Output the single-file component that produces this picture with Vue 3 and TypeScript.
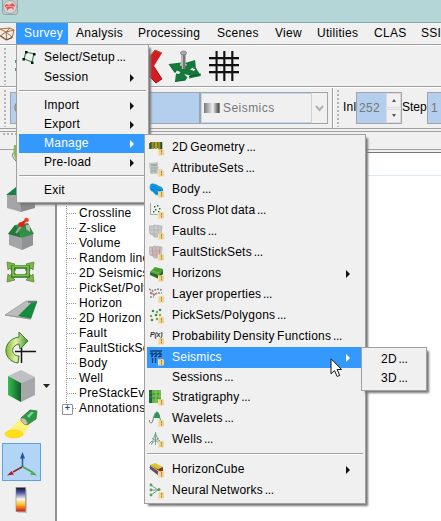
<script setup lang="ts">
interface Entry { label: string; more?: boolean; icon?: string; arrow?: boolean; active?: boolean; sep?: boolean }

const bar: { label: string; width: number; active?: boolean }[] = [
  { label: 'Survey', width: 52, active: true },
  { label: 'Analysis', width: 62 },
  { label: 'Processing', width: 79 },
  { label: 'Scenes', width: 58 },
  { label: 'View', width: 42 },
  { label: 'Utilities', width: 57 },
  { label: 'CLAS', width: 47 },
  { label: 'SSIS', width: 50 },
]

const survey: Entry[] = [
  { label: 'Select/Setup', more: true, icon: 'setup' },
  { label: 'Session', arrow: true },
  { label: '', sep: true },
  { label: 'Import', arrow: true },
  { label: 'Export', arrow: true },
  { label: 'Manage', arrow: true, active: true },
  { label: 'Pre-load', arrow: true },
  { label: '', sep: true },
  { label: 'Exit' },
]

const manage: Entry[] = [
  { label: '2D Geometry', more: true, icon: 'geometry' },
  { label: 'AttributeSets', more: true, icon: 'attributes' },
  { label: 'Body', more: true, icon: 'body' },
  { label: 'Cross Plot data', more: true, icon: 'crossplot' },
  { label: 'Faults', more: true, icon: 'faults' },
  { label: 'FaultStickSets', more: true, icon: 'sticks' },
  { label: 'Horizons', icon: 'horizons', arrow: true },
  { label: 'Layer properties', more: true, icon: 'layers' },
  { label: 'PickSets/Polygons', more: true, icon: 'picks' },
  { label: 'Probability Density Functions', more: true, icon: 'pdf' },
  { label: 'Seismics', icon: 'seismics', arrow: true, active: true },
  { label: 'Sessions', more: true },
  { label: 'Stratigraphy', more: true, icon: 'strat' },
  { label: 'Wavelets', more: true, icon: 'wavelets' },
  { label: 'Wells', more: true, icon: 'wells' },
  { label: '', sep: true },
  { label: 'HorizonCube', icon: 'cube', arrow: true },
  { label: 'Neural Networks', more: true, icon: 'neural' },
]

const dims: Entry[] = [
  { label: '2D', more: true },
  { label: '3D', more: true },
]

const tree: string[] = ['Crossline', 'Z-slice', 'Volume', 'Random line', '2D Seismics', 'PickSet/Polygon', 'Horizon', '2D Horizon', 'Fault', 'FaultStickSet', 'Body', 'Well', 'PreStackEvents', 'Annotations']
</script>

<template>
  <div class="window">
    <header class="title">
      <svg width="16" height="15" viewBox="0 0 16 15"><rect x=".5" y="-2" width="15" height="16.500" rx="2" fill="#bccccc" stroke="#94a5a5" /><circle cx="8" cy="7" r="6.500" fill="#ddd5d3" stroke="#899999" stroke-width=".7" /><path d="M2.500 6l2-2 3 1 3-2 3 3-2 1v3l-2-2-3 1-1 2-1-3z" fill="#e8514b" /><path d="M4 7l3-1 5 1" stroke="#f6aaa6" fill="none" /></svg>
    </header>
    <nav class="menubar">
      <svg class="logo" width="16" height="20" viewBox="0 0 16 20"><path d="M0 6l10-1 4 2-2 8-6 2-6-4M0 6l6 3 8-2M6 9l1 8M6 9l-6 4M10 5L6 9l6 5" fill="none" stroke="#a86a34" /><path d="M1 13l6 4 5-3" stroke="#55503a" fill="none" /></svg>
      <span v-for="m in bar" :key="m.label" class="top" :class="{ active: m.active }" :style="{ width: m.width + 'px' }">{{ m.label }}</span>
    </nav>
    <div class="toolbar">
      <i class="grip"></i>
      <svg width="225" height="40" viewBox="15 46 225 40">
        <path d="M15 60h2v3h-2zM15 68h2v3h-2z" fill="#57a065" />
        <path d="M145 62l10-12 7 3-8 13 8 13-6 4-11-10z" fill="#d31c20" /><path d="M149 57l6-7 7 3" stroke="#b95728" fill="none" /><path d="M154 67l8 12-6 4-7-7" stroke="#a91519" fill="none" />
        <path d="M184 74L187.500 77.500l-2 2.500L175 81.500l1-8 3 .5 1.500-2-4-1.500-1.500 2L169 64l12-1.500-1 3 4 1.500 3-2-2-2 10-3 1 8-3-.5-3 2 4 1.500 2-3 5 8-12 2.500 1-3z" fill="#16783a" />
        <path d="M169 64l6 8.500 1.500-2M175 81.500l10.500-1.500M189 76.500l12-2.500M196 68.500l-3-.5" stroke="#075d25" fill="none" /><path d="M181.500 54v15h4V54z" fill="#777" /><path d="M182.500 55v14" stroke="#bcbcbc" /><ellipse cx="183.500" cy="53" rx="3" ry="2" fill="#aaa" stroke="#777" stroke-width=".7" />
        <path d="M209 59h30M209 66h30M209 73h30M217 51v30M225 51v30M233 51v30" stroke="#999" stroke-width="1.500" /><path d="M209 58h30M209 65h30M209 72h30M216.500 51v30M224.200 51v30M232.200 51v30" stroke="#111" stroke-width="1.900" />
      </svg>
    </div>
    <div class="toolbar second">
      <i class="grip"></i>
      <div class="combo attr">0</div>
      <div class="combo seis"><i class="ramp"></i><span>Seismics</span><div class="drop"><svg width="9" height="8" viewBox="0 0 9 8"><path d="M1 2l3.500 4L8 2" fill="none" stroke="#b0b0b0" stroke-width="2" /></svg></div></div>
      <i class="divider"></i>
      <i class="grip g2"></i>
      <label class="inl">Inl</label>
      <div class="spin"><span>252</span><div class="buttons"><b><i class="up"></i></b><b><i class="down"></i></b></div></div>
      <label class="step">Step</label>
      <div class="spin last"><span>1</span></div>
    </div>
    <div class="strip"></div>
    <main>
      <aside>
        <i class="hgrip"></i>
        <svg width="54" height="386" viewBox="0 135 54 386">
          <defs>
            <linearGradient id="gg"><stop stop-color="#88b735" /><stop offset=".45" stop-color="#e3f2a6" /><stop offset="1" stop-color="#39942d" /></linearGradient>
            <linearGradient id="cg"><stop stop-color="#36bd4e" /><stop offset="1" stop-color="#115c2d" /></linearGradient>
            <linearGradient id="rb" x1="0" x2="0" y1="0" y2="1"><stop stop-color="#111322" /><stop offset=".2" stop-color="#4552a0" /><stop offset=".48" stop-color="#faf6ef" /><stop offset=".7" stop-color="#ffc52e" /><stop offset=".83" stop-color="#f27519" /><stop offset="1" stop-color="#d91118" /></linearGradient>
          </defs>
          <path d="M14 145l8 0v15l-6 2-3-6z" fill="#8bb758" /><path d="M13 153q-2 3 3 8" stroke="#777" fill="#fff" />
          <path d="M6 195l15-12 15 12z" fill="#168241" /><path d="M7 195h14v17l-14-4z" fill="#a5a5a7" /><path d="M21 196l14-1v13l-14 4z" fill="#8b8b8e" />
          <path d="M9 233l13 5 11-4v11l-11 5-13-5z" fill="#a4a5a8" /><path d="M22 238l11-4v11l-11 5z" fill="#929397" /><path d="M8 234l7-9 13-2 6 11-12 4-2-3z" fill="#329044" /><path d="M15 225l5 10 2 3-14-4z" fill="#207b36" /><path d="M26 225h4v7l-4-3z" fill="#b7b7b7" /><path d="M16 233l6-8" stroke="#aaa" stroke-width="2" /><path d="M21 224l5-3.500" stroke="#cb2019" stroke-width="2.500" /><ellipse cx="21.500" cy="224.500" rx="3.300" ry="2.500" fill="#df2719" /><circle cx="26.500" cy="220" r="2.300" fill="#e5462b" />
          <g stroke="#65803f" stroke-width=".8" fill="#78ba43"><path d="M7 262l8 2-2 2 3 4-4 1-2-3-2 2zM34 262l-8 2 2 2-3 4 4 1 2-3 2 2zM7 282l8-2-2-2 3-4-4-1-2 3-2-2zM34 282l-8-2 2-2-3-4 4-1 2 3 2-2z" /></g><rect x="13" y="267" width="15" height="9" fill="none" stroke="#286f29" stroke-width="3.500" /><rect x="13" y="266.500" width="15" height="9" fill="none" stroke="#83c646" stroke-width="1.700" />
          <path d="M5 315l21-14h11l-7 18z" fill="#bcbcbc" stroke="#888" stroke-width=".6" /><path d="M18 316l13-13 6-1-6 17z" fill="#168b3f" /><path d="M28 302h9" stroke="#225b34" /><path d="M5 315l13 2 13 2" stroke="#999" fill="none" />
          <path d="M15 351.500h21M21.500 341v22" stroke="#151515" stroke-width="1.500" /><path d="M18 363C3 361 2 343 15 338l4-1v-5l9 9-8 8-1-5c-9 2-8 12 0 12z" fill="url(#gg)" stroke="#397b30" />
          <path d="M8 376l13-6 14 7-14 6z" fill="#bfc0c4" /><path d="M21 383l14-6v18l-14 7z" fill="#a6a7ab" /><path d="M8 376l13 7v19l-13-7z" fill="url(#cg)" /><path d="M43 384h7l-3.500 4z" fill="#222" />
          <path d="M5 434l17-17 8 8-7 11z" fill="#fff17a" /><ellipse cx="14" cy="434" rx="9" ry="4" fill="#ffe016" stroke="#f3c627" stroke-width=".6" /><path d="M21 418l9-8 7 1-1 8-9 6z" fill="#2a9948" stroke="#386f3c" stroke-width=".8" /><path d="M27 416l4-4 3 0-5 6z" fill="#7ad68b" /><path d="M21 418q5-1 7 6l-3 1-4-4z" fill="#cac5a0" stroke="#777" stroke-width=".6" />
          <rect x="2.500" y="443.500" width="38" height="37" fill="#b3d5f5" stroke="#61a1e2" /><path d="M22.500 467V456" stroke="#2359a8" stroke-width="1.500" /><path d="M20 458.500l2.500-6.500 2.500 6.500z" fill="#2053a0" /><path d="M22 467l-9 5" stroke="#902425" stroke-width="1.500" /><path d="M7 475.500l4.500-4.500 2.500 3.500z" fill="#b51e20" /><path d="M23 467l9 5" stroke="#48a248" stroke-width="1.500" /><path d="M37 475.500l-7-1 2.500-3.500z" fill="#4bad4d" />
          <rect x="18" y="489" width="9" height="24" fill="#a9a9a9" opacity=".6" /><rect x="16" y="487.500" width="9.500" height="24" fill="url(#rb)" stroke="#858585" stroke-width=".6" />
        </svg>
      </aside>
      <section>
        <div class="head"></div>
        <ul>
          <li v-for="t in tree" :key="t">{{ t }}</li>
        </ul>
      </section>
    </main>

    <div class="popup survey">
      <template v-for="(e, i) in survey" :key="i">
        <hr v-if="e.sep" />
        <div v-else class="entry" :class="{ active: e.active, tall: e.icon }">
          <svg v-if="e.icon" class="pic" width="16" height="16" viewBox="0 0 16 16"><path d="M5 2l8 2-2 8-8-3z" fill="none" stroke="#36875a" stroke-width="1.200" /><path d="M4 1h2.500v2.500H4zM12 3h2.500v2.500H12zM10 11.500h2.500V14H10zM1.500 8H4v2.500H1.500z" fill="#111" /></svg>
          <span>{{ e.label }}<em v-if="e.more"> ...</em></span><i v-if="e.arrow" class="arrow"></i>
        </div>
      </template>
    </div>

    <div class="popup manage">
      <template v-for="(e, i) in manage" :key="i">
        <hr v-if="e.sep" />
        <div v-else class="entry" :class="{ active: e.active, tall: e.icon }">
          <svg v-if="e.icon" class="pic" width="16" height="16" viewBox="0 0 16 16">
            <g v-if="e.icon === 'geometry'"><path d="M1 2l12 0v9l-3 0v-3L1 9z" fill="#5a7621" /><path d="M4 2v7M10 2v8" stroke="#bc842d" stroke-width="1.600" /><path d="M7 2v7" stroke="#a5ad30" stroke-width="2" /><path d="M1 3v6M12.500 2v8" stroke="#174a26" stroke-width="1.500" /></g>
            <g v-else-if="e.icon === 'attributes'"><path d="M0 2l9-1 1 12H1z" fill="#c5cbc7" /><path d="M2 4h6" stroke="#7d8781" /><path d="M2 7h7M2 10h6M3 6v6M6 6v6" stroke="#9aa29d" stroke-width=".8" /><path d="M9 8h4v4H9z" fill="#d5d5d5" /></g>
            <g v-else-if="e.icon === 'body'"><path d="M1 3c2-3 6-1 9 1 5 1 5 5 3 8-2 3-8 1-9-2C1 9 0 6 1 3z" fill="#109be2" /><path d="M3 4c3 0 5 5 10 5M2 7c3 0 4 4 8 5" stroke="#0872b9" fill="none" /></g>
            <g v-else-if="e.icon === 'crossplot'"><path d="M1.500 0v11.500H13" fill="none" stroke="#a5aaa7" /><path d="M5 3h1.500v1.500H5zM8 2h1.500v1.500H8zM6 6h1.500v1.500H6zM10 5h1.500v1.500H10zM4 8h1.500v1.500H4zM9 8h1.500v1.500H9z" fill="#226c42" /></g>
            <g v-else-if="e.icon === 'faults' || e.icon === 'sticks'"><path d="M0 2l4 0 1-1 8 1-1 11-7 0-1-2-3-1z" fill="#c8cacb" stroke="#a8aaac" stroke-width=".7" /><path d="M1 6h11M2 10h10M5 1v11M9 2v10" stroke="#a8aaac" stroke-width=".6" /><path v-if="e.icon === 'sticks'" d="M3 2l1 9M7 2v10M11 2l-1 9" stroke="#d98e8a" fill="none" /></g>
            <g v-else-if="e.icon === 'horizons'"><path d="M1 6l5-5 8 2-4 6z" fill="#4a9e31" /><path d="M1 6l9 3 4-6v5l-4 5-9-4z" fill="#286a22" /><path d="M3 5l7 2" stroke="#82ba40" /></g>
            <g v-else-if="e.icon === 'layers'"><path d="M0 2l4 2 4-2 5 1M1 6l4 2 3-2 5 0M1 10l4 0" stroke="#8b8b8b" fill="none" stroke-width="1.700" stroke-dasharray="2 1" /><path d="M1 5l4 2M5 8l3-2" stroke="#cf7a77" stroke-width="1.300" /></g>
            <g v-else-if="e.icon === 'picks'"><g fill="#359252"><circle cx="4" cy="3" r="1.300" /><circle cx="11" cy="2" r="1.300" /><circle cx="7" cy="7" r="1.300" /><circle cx="3" cy="12" r="1.300" /></g><g fill="#89a43e"><circle cx="8" cy="4" r="1.200" /><circle cx="2" cy="8" r="1.200" /><circle cx="11" cy="7" r="1.200" /><circle cx="8" cy="11" r="1.300" /></g></g>
            <text v-else-if="e.icon === 'pdf'" x="1" y="8" class="pdf">P(x)</text>
            <g v-else-if="e.icon === 'seismics'"><path d="M1 1h12M1 4c2-2 2 2 4 0s2 2 4 0 2 1 4 0M3 2v4M7 2v4M11 2v4M3.500 8v5M6.500 8v5" stroke="#173f70" fill="none" stroke-width="1.300" /><path d="M2 7l2-1M5 7l3-1M9 7l4-1" stroke="#102f55" /></g>
            <g v-else-if="e.icon === 'strat'"><path d="M0 0h3v13H0z" fill="#25653f" /><path d="M3 0h9v13H3z" fill="#62b949" /><path d="M0 3h3M0 7h3M3 4h9M3 8h9" stroke="#2c8a54" /><path d="M7 0v13M11 0v8" stroke="#a4c74b" /></g>
            <g v-else-if="e.icon === 'wavelets'"><path d="M0 9c1 4 3 4 4 0 1-4 2-8 4-8s2 5 4 9" fill="none" stroke="#66726c" /><path d="M5 7c1-7 5-8 6 0z" fill="#299754" /></g>
            <g v-else-if="e.icon === 'wells'"><path d="M6.500 0v13M6.500 1l-4 12M6.500 1l4 11M3 6l7 5M10 6l-7 5M3 9l-3 3M10 8l4 4" stroke="#739c88" stroke-width=".9" fill="none" /></g>
            <g v-else-if="e.icon === 'cube'"><path d="M1 3l5-2 8 4-5 2z" fill="#d5c930" /><path d="M1 3l8 4 4 7-3 0-9-7z" fill="#ac332a" /><path d="M1 5l9 7" stroke="#315b9b" stroke-width="2" /><path d="M9 7l5-2v4l-3 3z" fill="#85341e" /><path d="M2 4l9 6" stroke="#edc43b" /></g>
            <g v-else><path d="M2 2l7 5-7 5M2 7h8" fill="none" stroke="#7ca188" /><g fill="#4ea45c"><circle cx="2" cy="2" r="1.400" /><circle cx="2" cy="7" r="1.400" /><circle cx="2" cy="12" r="1.400" /><circle cx="10" cy="6.500" r="1.500" /></g></g>
            <path d="M9 9.500l5-.5 1 1v5l-1 .5H9z" fill="#f1d48b" /><path d="M9.500 9.500v5" stroke="#f8e4a9" /><path d="M12.500 10v2.500M12.500 13v1.500" stroke="#a98657" />
          </svg>
          <span>{{ e.label }}<em v-if="e.more"> ...</em></span><i v-if="e.arrow" class="arrow"></i>
        </div>
      </template>
    </div>

    <div class="popup dims">
      <div v-for="e in dims" :key="e.label" class="entry"><span>{{ e.label }}<em v-if="e.more"> ...</em></span></div>
    </div>
    <svg class="cursor" width="14" height="20" viewBox="0 0 14 20"><path d="M1 .8v15l3.500-3.300 2.700 6 2.500-1.100-2.600-5.900h4.500z" fill="#fff" stroke="#151515" /></svg>
  </div>
</template>

<style>
body { overflow: hidden; }
</style>
<style scoped>
* { box-sizing: border-box; }
.window { position: relative; width: 441px; height: 521px; overflow: hidden; background: #f0f0f0; color: #000; font: 12px/15px "Liberation Sans", Arial, sans-serif; letter-spacing: .28px; white-space: nowrap; }
.title { height: 23px; padding-left: 2px; background: #b5d6d6; border-bottom: 1px solid #8eabab; }
svg { display: block; flex: none; }
.menubar { display: flex; height: 22px; border-bottom: 1px solid #a0a0a0; }
.logo { flex: none; }
.top { flex: none; padding: 3px 0 0 8px; height: 21px; }
.top.active, .entry.active { background: #3399ff; color: #fff; }
.toolbar { display: flex; height: 42px; border-top: 1px solid #fff; border-bottom: 1px solid #a0a0a0; }
.toolbar > * { flex: none; }
.toolbar:not(.second) > svg { margin-left: 9px; }
.grip { width: 2px; height: 37px; margin: 2px 0 0 4px; background: repeating-linear-gradient(#b4b4b4 0 2px, transparent 2px 4px); }
.second { align-items: flex-start; }
.combo { height: 32px; margin-top: 4px; border: 1px solid #a0a4aa; background: #b3cfed; color: #777; }
.attr { width: 190px; margin-left: 4px; padding: 8px 0 0 3px; }
.seis { display: flex; align-items: center; width: 128px; box-shadow: inset 0 0 0 1px #c0d8ef; background: #f0f0f0; padding-left: 3px; }
.ramp { width: 16px; height: 10px; margin-right: 3px; background: linear-gradient(90deg, #777, #eee 55%, #555 90%, #999); }
.seis span { letter-spacing: .45px; }
.drop { display: flex; align-items: center; justify-content: center; width: 16px; height: 30px; margin-left: auto; border-left: 1px solid #d0d0d0; background: #f0f0f0; }
.divider { width: 2px; height: 40px; margin-left: 4px; border-left: 1px solid #a0a0a0; background: #fff; }
.g2 { margin-left: 3px; }
.inl { margin: 12px 0 0 4px; width: 13px; }
.spin { display: flex; width: 46px; height: 32px; margin-top: 4px; border: 1px solid #a0a4aa; background: #b3cfed; color: #777; padding-left: 2px; }
.spin span { margin-top: 8px; }
.buttons { display: flex; flex-direction: column; gap: 1px; width: 15px; margin-left: auto; background: #f0f0f0; }
.buttons b { display: flex; flex: 1; align-items: center; justify-content: center; border: 1px solid #dadada; }
.up, .down { width: 0; height: 0; border: 2.5px solid transparent; border-top: 0; border-bottom: 3px solid #555; }
.down { border-top: 3px solid #555; border-bottom: 0; }
.step { margin: 12px 0 0 0; width: 25px; letter-spacing: 0; }
.last { padding-left: 3px; }
.strip { height: 19px; margin-top: 2px; border-top: 1px solid #a0a0a0; border-bottom: 1px solid #a0a0a0; }
main { display: flex; height: 388px; margin-top: -17px; }
aside { width: 55px; height: 388px; flex: none; }
.hgrip { display: block; width: 38px; height: 2px; margin-left: 3px; background: repeating-linear-gradient(90deg, #b4b4b4 0 2px, transparent 2px 4px); }
section { flex: 1; height: 369px; margin-top: 19px; border-top: 1px solid #72767c; border-left: 2px solid #909090; background: #fff; }
.head { height: 23px; border-bottom: 1px solid #dfe9f3; }
ul { list-style: none; margin: 30px 0 0 9px; padding: 0; border-left: 1px dotted #999; height: 203px; }
li { position: relative; height: 15px; padding-left: 12px; }
li::before { content: ""; position: absolute; left: 0; top: 7px; width: 9px; border-top: 1px dotted #999; }
li:last-child::after { content: "+"; position: absolute; left: -5px; top: 3px; width: 9px; height: 9px; border: 1px solid #919191; border-radius: 1px; background: #fff; color: #234b91; font: bold 9px/7px "Liberation Sans", sans-serif; text-align: center; letter-spacing: 0; }
.popup { position: absolute; padding: 2px; border: 1px solid #a0a0a0; background: #f0f0f0; box-shadow: 3px 3px 2px -1px #777; }
.survey { left: 16px; top: 44px; width: 133px; }
.manage { left: 144px; top: 134px; width: 222px; }
.dims { left: 361px; top: 347px; width: 66px; }
.entry { display: flex; align-items: center; height: 19px; padding-left: 25px; }
.entry.tall { height: 21px; padding-left: 2px; }
.pic { margin-right: 7px; }
.entry span { letter-spacing: .23px; word-spacing: -1.1px; white-space: pre; }
.entry em { font-style: normal; letter-spacing: -.35px; word-spacing: -1.2px; }
.dims .entry { padding-left: 17px; }
.arrow { width: 0; height: 0; margin: 0 12px 0 auto; border: 4px solid transparent; border-right: 0; border-left-color: #111; }
.manage .arrow { margin-right: 13px; }
.active .arrow { border-left-color: #fff; }
hr { height: 2px; margin: 3px 0 4px; border: 0; border-top: 1px solid #a0a0a0; background: #fff; }
.pdf { font: italic bold 7px "Liberation Sans", sans-serif; letter-spacing: -.2px; fill: #333; }
.cursor { position: absolute; left: 330px; top: 358px; }
</style>
